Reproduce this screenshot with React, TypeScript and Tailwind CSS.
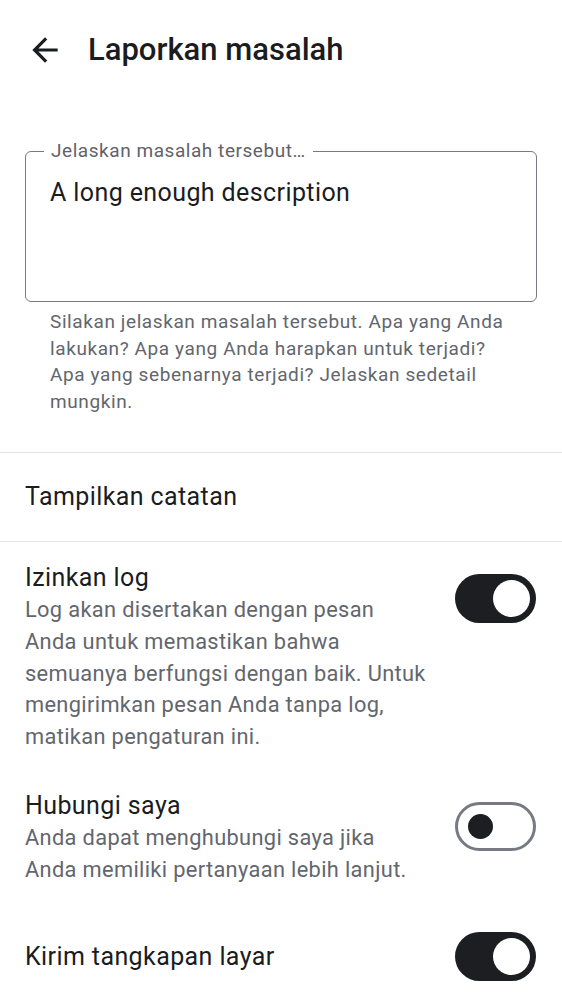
function Toggle({ on }: { on: boolean }) {
  if (on) {
    return (
      <div className="w-[81px] h-[49px] rounded-full bg-[#1d1e22] flex items-center justify-end pr-[6px] shrink-0">
        <div className="w-[37px] h-[37px] rounded-full bg-white" />
      </div>
    )
  }
  return (
    <div className="w-[81px] h-[49px] rounded-full border-[3px] border-[#777a82] bg-white flex items-center pl-[10px] shrink-0">
      <div className="w-[25px] h-[25px] rounded-full bg-[#1d1e22]" />
    </div>
  )
}

function SettingRow({ title, lines, on, gap }: { title: string; lines: string[]; on: boolean; gap: string }) {
  return (
    <div className={`${gap} flex items-start justify-between`}>
      <div>
        <p className="text-[25px] leading-[32px] tracking-[0.4px]">{title}</p>
        <p className="text-[21.8px] leading-[31.75px] tracking-[0.35px] text-[#62666e]">
          {lines.map((l, i) => (
            <span key={i} className="block">{l}</span>
          ))}
        </p>
      </div>
      <div className="mt-[12px] mr-[1px]">
        <Toggle on={on} />
      </div>
    </div>
  )
}

export default function App() {
  return (
    <div className="w-[562px] h-[1000px] bg-white overflow-hidden font-['Roboto',sans-serif] text-[#1b1c1f]">
      {/* top bar */}
      <div className="h-[100px] flex items-center pl-[26px]">
        <svg width="38" height="38" viewBox="0 0 24 24" className="shrink-0">
          <path d="M20 11H7.83l5.59-5.59L12 4l-8 8 8 8 1.41-1.41L7.83 13H20v-2z" fill="#1b1c1f" />
        </svg>
        <h1 className="ml-[24px] text-[31px] font-medium leading-[36px]">Laporkan masalah</h1>
      </div>

      {/* description field */}
      <div className="px-[25px] mt-[51px]">
        <div className="relative h-[151px] border border-[#777a82] rounded-[6px] px-[24px] pt-[23px]">
          <span className="absolute left-[18px] -top-[13px] bg-white px-[7px] text-[19px] leading-[24px] tracking-[0.55px] text-[#5f626a]">
            Jelaskan masalah tersebut…
          </span>
          <p className="text-[25px] leading-[36px] tracking-[0.4px]">A long enough description</p>
        </div>
        <p className="mt-[7px] px-[25px] text-[19px] leading-[26.5px] tracking-[0.6px] text-[#62666e]">
          <span className="block">Silakan jelaskan masalah tersebut. Apa yang Anda</span>
          <span className="block">lakukan? Apa yang Anda harapkan untuk terjadi?</span>
          <span className="block">Apa yang sebenarnya terjadi? Jelaskan sedetail</span>
          <span className="block">mungkin.</span>
        </p>
      </div>

      <div className="mt-[37px] h-px bg-[#e4e4e8]" />
      <div className="h-[88px] flex items-center px-[25px]">
        <span className="text-[25px] leading-[32px] tracking-[0.4px]">Tampilkan catatan</span>
      </div>
      <div className="h-px bg-[#e4e4e8]" />

      {/* settings */}
      <div className="px-[25px]">
        <SettingRow
          gap="mt-[20px]"
          title="Izinkan log"
          on
          lines={[
            'Log akan disertakan dengan pesan',
            'Anda untuk memastikan bahwa',
            'semuanya berfungsi dengan baik. Untuk',
            'mengirimkan pesan Anda tanpa log,',
            'matikan pengaturan ini.',
          ]}
        />
        <SettingRow
          gap="mt-[37px]"
          title="Hubungi saya"
          on={false}
          lines={['Anda dapat menghubungi saya jika', 'Anda memiliki pertanyaan lebih lanjut.']}
        />

        <div className="mt-[47px] flex items-center justify-between">
          <p className="text-[25px] leading-[32px] tracking-[0.4px]">Kirim tangkapan layar</p>
          <div className="mr-[1px]">
            <Toggle on />
          </div>
        </div>
      </div>
    </div>
  )
}
